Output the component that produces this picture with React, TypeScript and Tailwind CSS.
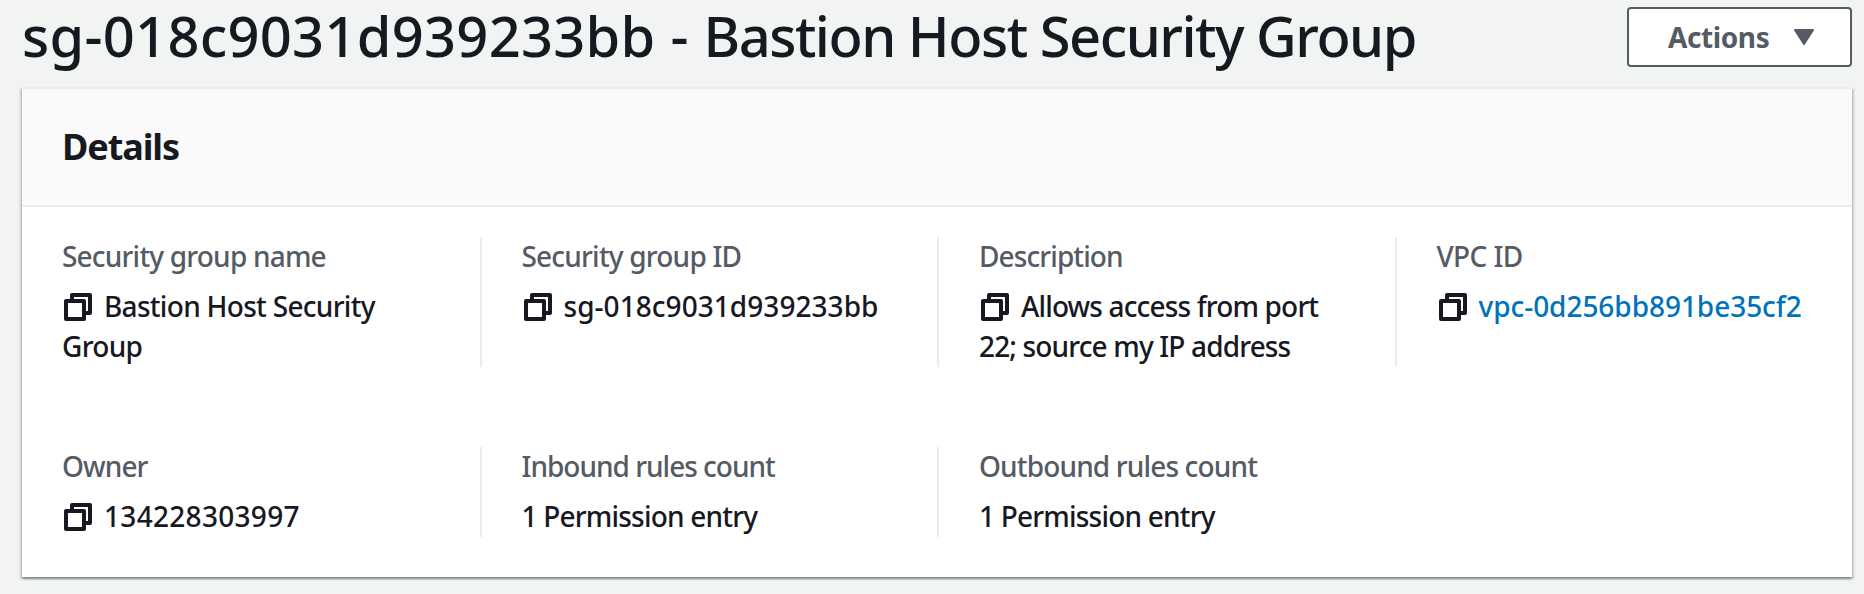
import type { ReactNode } from "react";

function CopyIcon() {
  return (
    <svg viewBox="0 0 32 32" className="mr-2.5 inline-block h-8 w-8 align-[-6px]" fill="none" stroke="#16191f" strokeWidth="4" strokeLinejoin="round">
      <rect x="4" y="10" width="18" height="18" />
      <path d="M10 8V4H28V22H24" />
    </svg>
  );
}

type Field = { label: string; labelTracking: string; value: ReactNode; tracking: string; copy?: boolean };

const rows: Field[][] = [
  [
    { label: "Security group name", labelTracking: "tracking-[-0.8px]", value: "Bastion Host Security Group", tracking: "tracking-[-0.7px]", copy: true },
    { label: "Security group ID", labelTracking: "tracking-[-0.8px]", value: "sg-018c9031d939233bb", tracking: "tracking-[0.05px]", copy: true },
    { label: "Description", labelTracking: "tracking-[-0.9px]", value: "Allows access from port 22; source my IP address", tracking: "tracking-[-0.85px]", copy: true },
    { label: "VPC ID", labelTracking: "tracking-[-0.6px]", value: <a className="text-[#0073bb]">vpc-0d256bb891be35cf2</a>, tracking: "tracking-[-0.05px]", copy: true },
  ],
  [
    { label: "Owner", labelTracking: "tracking-[-0.9px]", value: "134228303997", tracking: "tracking-[0.3px]", copy: true },
    { label: "Inbound rules count", labelTracking: "tracking-[-1px]", value: "1 Permission entry", tracking: "tracking-[-0.8px]" },
    { label: "Outbound rules count", labelTracking: "tracking-[-0.85px]", value: "1 Permission entry", tracking: "tracking-[-0.8px]" },
  ],
];

export default function App() {
  return (
    <div className="h-[594px] w-[1864px] bg-[#f2f3f3] pr-3 pl-[22px] font-['Noto_Sans',sans-serif] text-[#16191f]">
      <header className="flex h-[87px] items-start justify-between">
        <h1 className="text-[56px] leading-[71px] font-medium tracking-[-1.5px] whitespace-nowrap">
          <span className="tracking-[0.28px]">sg-018c9031d939233bb - </span>Bastion Host Security Group
        </h1>
        <button className="mt-[7px] flex h-[60px] w-[225px] shrink-0 items-center rounded-[4px] border-2 border-[#545b64] bg-white pl-[39px] text-[28px] font-bold text-[#545b64]">
          <span className="w-[126px] pb-px text-left tracking-[-0.4px]">Actions</span>
          <svg viewBox="0 0 20 16" className="h-4 w-5" fill="#545b64" stroke="#545b64" strokeWidth="2" strokeLinejoin="round">
            <path d="M1 1H19L10 15Z" />
          </svg>
        </button>
      </header>
      <section className="h-[490px] border-t-2 border-[#eaeded] bg-white shadow-[0_2px_2px_0_rgba(0,28,36,0.3),2px_2px_2px_0_rgba(0,28,36,0.15),-2px_2px_2px_0_rgba(0,28,36,0.15)]">
        <div className="flex h-[118px] items-center border-b-2 border-[#eaeded] bg-[#fafafa] pl-10">
          <h2 className="text-[36px] leading-[44px] font-bold tracking-[-1.1px]">Details</h2>
        </div>
        <div className="flex flex-col gap-20 pt-[30px]">
          {rows.map((row, r) => (
            <div key={r} className="grid grid-cols-4">
              {row.map((f, i) => (
                <div key={f.label} className={i === 0 ? "px-10" : "border-l-2 border-[#eaeded] px-10"}>
                  <div className={`-mt-px mb-2.5 text-[28px] leading-10 font-medium text-[#545b64] ${f.labelTracking}`}>{f.label}</div>
                  <div className={`mb-px text-[28px] leading-10 font-medium ${f.tracking}`}>
                    {f.copy && <CopyIcon />}
                    {f.value}
                  </div>
                </div>
              ))}
            </div>
          ))}
        </div>
      </section>
    </div>
  );
}
